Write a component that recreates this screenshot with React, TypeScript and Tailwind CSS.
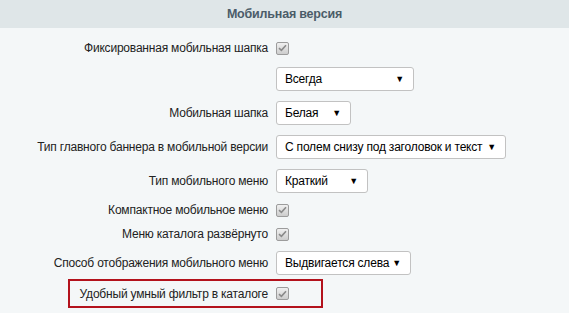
import React from "react";

function Check() {
  return (
    <span className="inline-flex h-[13px] w-[13px] items-center justify-center rounded-[2px] border border-[#9c9c9c] bg-gradient-to-b from-[#f0f0f0] to-[#cdcdcd]">
      <svg width="9" height="8" viewBox="0 0 9 8">
        <path d="M1 4.2 L3.4 6.4 L8 1.2" fill="none" stroke="#8a8a8a" strokeWidth="1.6" />
      </svg>
    </span>
  );
}

function Select({ value, w }: { value: string; w: string }) {
  return (
    <div className={`flex h-[24px] items-center justify-between whitespace-nowrap rounded-[3px] border border-[#c2c2c2] bg-white pl-[8px] pr-[9px] text-black ${w}`}>
      <span>{value}</span>
      <span className="text-[9px] leading-none">▼</span>
    </div>
  );
}

function Row({ label, children, mt }: { label?: string; children: React.ReactNode; mt: string }) {
  return (
    <div className={`grid h-[24px] grid-cols-[276px_1fr] items-center ${mt}`}>
      <div className="whitespace-nowrap pr-[8px] text-right">{label}</div>
      <div className="flex items-center">{children}</div>
    </div>
  );
}

export default function App() {
  return (
    <div className="h-[313px] w-[569px] bg-[#f4f7f8] text-[12px] tracking-[-0.2px] text-[#222] [font-family:'Liberation_Sans',Arial,sans-serif]">
      <div className="flex h-[28px] items-center justify-center bg-[#dfe6e8] text-[12.5px] font-bold tracking-[-0.2px] text-[#4b5c69]">
        Мобильная версия
      </div>
      <div className="flex flex-col">
        <Row label="Фиксированная мобильная шапка" mt="mt-[8px]">
          <Check />
        </Row>
        <Row mt="mt-[7px]">
          <Select value="Всегда" w="w-[138px]" />
        </Row>
        <Row label="Мобильная шапка" mt="mt-[10px]">
          <Select value="Белая" w="w-[75px]" />
        </Row>
        <Row label="Тип главного баннера в мобильной версии" mt="mt-[10px]">
          <Select value="С полем снизу под заголовок и текст" w="w-[230px]" />
        </Row>
        <Row label="Тип мобильного меню" mt="mt-[10px]">
          <Select value="Краткий" w="w-[92px]" />
        </Row>
        <Row label="Компактное мобильное меню" mt="mt-[5px]">
          <Check />
        </Row>
        <Row label="Меню каталога развёрнуто" mt="mt-[0px]">
          <Check />
        </Row>
        <Row label="Способ отображения мобильного меню" mt="mt-[5px]">
          <Select value="Выдвигается слева" w="w-[135px]" />
        </Row>
        <div className="mt-[4px] ml-[68px] grid h-[29px] w-[255px] grid-cols-[206px_1fr] items-center border-2 border-[#b3121c]">
          <div className="whitespace-nowrap pr-[8px] text-right">Удобный умный фильтр в каталоге</div>
          <div className="flex items-center">
            <Check />
          </div>
        </div>
      </div>
    </div>
  );
}
